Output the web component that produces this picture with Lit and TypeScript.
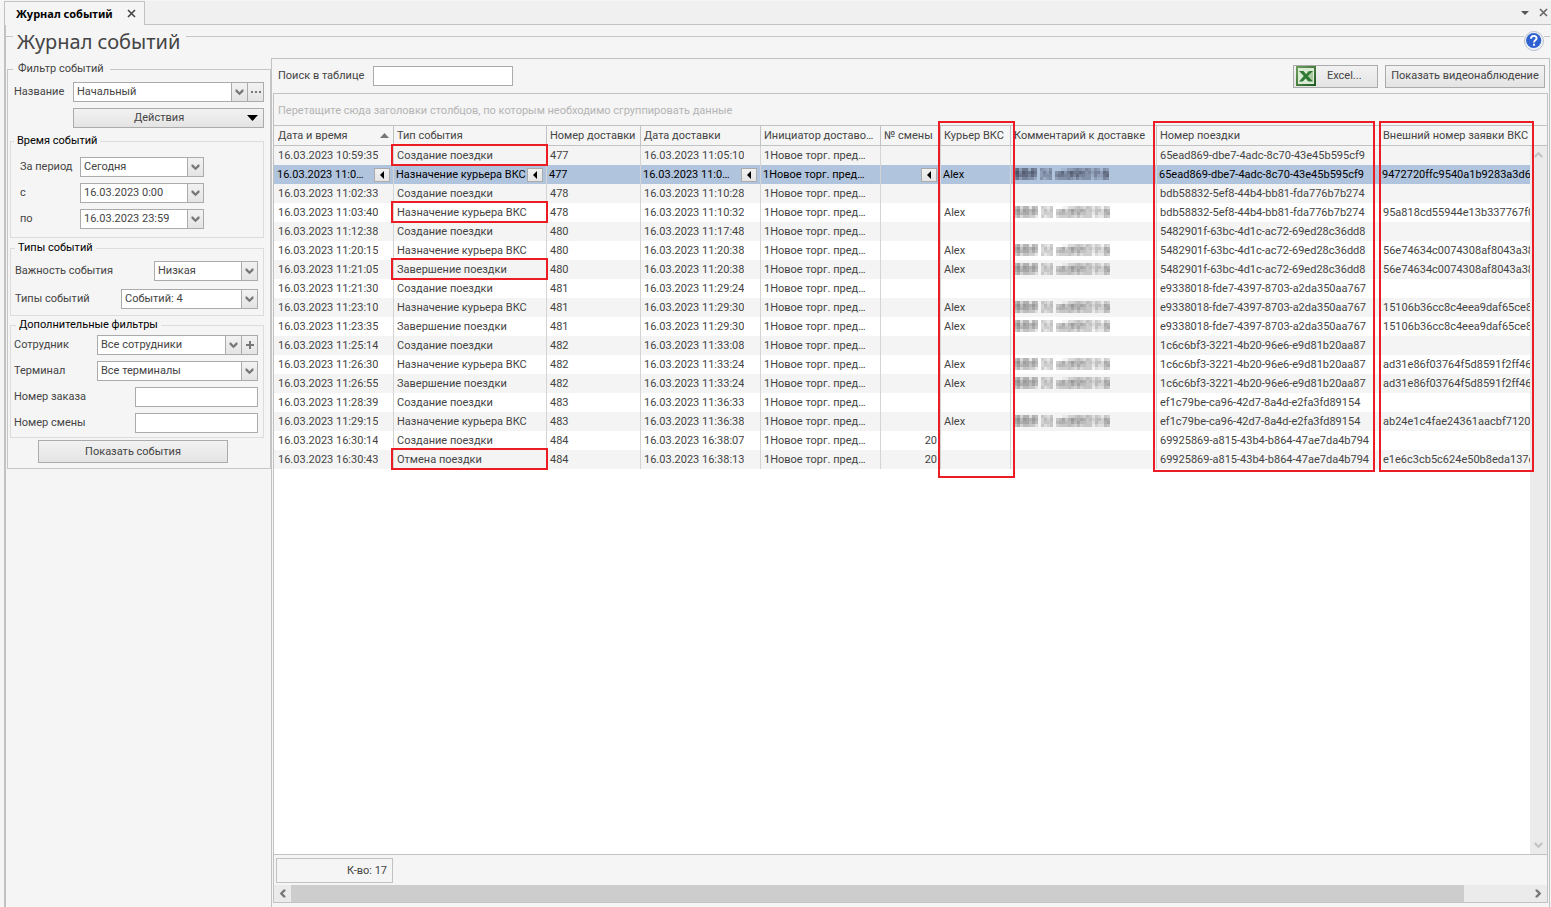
import { LitElement, html, css, svg } from "lit";
import { customElement, state } from "lit/decorators.js";
import { classMap } from "lit/directives/class-map.js";

interface Row {
  at: string;
  type: string;
  num: string;
  date: string;
  shift?: string;
  courier?: string;
  trip: string;
  ext?: string;
  marked?: boolean;
}

const CREATE = "Создание поездки";
const ASSIGN = "Назначение курьера ВКС";
const DONE = "Завершение поездки";
const CANCEL = "Отмена поездки";

const T1 = "65ead869-dbe7-4adc-8c70-43e45b595cf9";
const T2 = "bdb58832-5ef8-44b4-bb81-fda776b7b274";
const T3 = "5482901f-63bc-4d1c-ac72-69ed28c36dd8";
const T4 = "e9338018-fde7-4397-8703-a2da350aa767";
const T5 = "1c6c6bf3-3221-4b20-96e6-e9d81b20aa87";
const T6 = "ef1c79be-ca96-42d7-8a4d-e2fa3fd89154";
const T7 = "69925869-a815-43b4-b864-47ae7da4b794";

const ROWS: Row[] = [
  { at: "10:59:35", type: CREATE, num: "477", date: "11:05:10", trip: T1, marked: true },
  { at: "11:0…", type: ASSIGN, num: "477", date: "11:0…", courier: "Alex", trip: T1, ext: "9472720ffc9540a1b9283a3d61" },
  { at: "11:02:33", type: CREATE, num: "478", date: "11:10:28", trip: T2 },
  { at: "11:03:40", type: ASSIGN, num: "478", date: "11:10:32", courier: "Alex", trip: T2, ext: "95a818cd55944e13b337767f0", marked: true },
  { at: "11:12:38", type: CREATE, num: "480", date: "11:17:48", trip: T3 },
  { at: "11:20:15", type: ASSIGN, num: "480", date: "11:20:38", courier: "Alex", trip: T3, ext: "56e74634c0074308af8043a38" },
  { at: "11:21:05", type: DONE, num: "480", date: "11:20:38", courier: "Alex", trip: T3, ext: "56e74634c0074308af8043a38", marked: true },
  { at: "11:21:30", type: CREATE, num: "481", date: "11:29:24", trip: T4 },
  { at: "11:23:10", type: ASSIGN, num: "481", date: "11:29:30", courier: "Alex", trip: T4, ext: "15106b36cc8c4eea9daf65ce86" },
  { at: "11:23:35", type: DONE, num: "481", date: "11:29:30", courier: "Alex", trip: T4, ext: "15106b36cc8c4eea9daf65ce86" },
  { at: "11:25:14", type: CREATE, num: "482", date: "11:33:08", trip: T5 },
  { at: "11:26:30", type: ASSIGN, num: "482", date: "11:33:24", courier: "Alex", trip: T5, ext: "ad31e86f03764f5d8591f2ff46" },
  { at: "11:26:55", type: DONE, num: "482", date: "11:33:24", courier: "Alex", trip: T5, ext: "ad31e86f03764f5d8591f2ff46" },
  { at: "11:28:39", type: CREATE, num: "483", date: "11:36:33", trip: T6 },
  { at: "11:29:15", type: ASSIGN, num: "483", date: "11:36:38", courier: "Alex", trip: T6, ext: "ab24e1c4fae24361aacbf71207" },
  { at: "16:30:14", type: CREATE, num: "484", date: "16:38:07", shift: "20", trip: T7 },
  { at: "16:30:43", type: CANCEL, num: "484", date: "16:38:13", shift: "20", trip: T7, ext: "e1e6c3cb5c624e50b8eda137d", marked: true },
];

/* Darkness of each 3px block of the hidden comment, 0 to 9. */
const MOSAIC = [
  "57366265043240001133454354243143",
  "79587686035350457468667645355376",
  "68677575034440566557575544253367",
  "46355442042340344454353444132254",
];

const mosaic = svg`<svg class="mosaic" width="96" height="12" viewBox="0 0 96 12" shape-rendering="crispEdges">${MOSAIC.flatMap((line, y) =>
  [...line].map((d, x) => (d === "0" ? "" : svg`<rect x=${x * 3} y=${y * 3} width="3" height="3" fill="currentColor" opacity=${Number(d) / 14} />`)),
)}</svg>`;

const chevron = (cls = "") => svg`<svg class="chev ${cls}" width="9" height="7" viewBox="0 0 9 7"><path d="M0.500 .5v2L4.500 6.300 8.500 2.500v-2h-1.500L4.500 3.200 2 .5z" fill="currentColor"/></svg>`;
const cross = svg`<svg width="9" height="9" viewBox="0 0 9 9"><path d="M1 1l7 7M8 1L1 8" stroke="currentColor" stroke-width="1.600" fill="none"/></svg>`;

const base = css`
  * { box-sizing: border-box; }
  button, input, select {
    font: inherit;
    color: inherit;
    border-radius: 0;
    margin: 0;
    outline: none;
  }
  button {
    display: flex;
    align-items: center;
    justify-content: center;
    padding: 0;
    border: 1px solid #ababab;
    background: linear-gradient(#f2f2f2, #e4e4e4);
  }
`;

@customElement("drop-field")
class DropField extends LitElement {
  static properties = { label: {}, value: {}, extra: {} };
  declare label: string;
  declare value: string;
  declare extra: string;

  static styles = [
    base,
    css`
      :host { display: block; }
      .field { display: flex; align-items: center; height: 20px; }
      label { flex: 1; white-space: nowrap; }
      .box {
        display: flex;
        width: var(--field-width);
        height: 20px;
        background: #fff;
        border: 1px solid #ababab;
      }
      .pick { display: grid; flex: 1; min-width: 0; }
      select {
        grid-area: 1 / 1;
        appearance: none;
        border: 0;
        background: none;
        padding: 0 19px 0 3px;
        line-height: 18px;
        min-width: 0;
      }
      .arrow, .more {
        display: flex;
        align-items: center;
        justify-content: center;
        width: 16px;
        border: 0;
        border-left: 1px solid #ababab;
        background: linear-gradient(#f2f2f2, #e4e4e4);
        color: #777;
      }
      .arrow { grid-area: 1 / 1; justify-self: end; pointer-events: none; }
    `,
  ];

  render() {
    return html`
      <div class="field">
        <label for="pick">${this.label}</label>
        <div class="box">
          <div class="pick">
            <select id="pick"><option>${this.value}</option></select>
            <span class="arrow">${chevron()}</span>
          </div>
          ${this.extra === "dots"
            ? html`<button class="more" aria-label="Ещё"><svg width="10" height="2" viewBox="0 0 10 2"><path d="M0 0h2v2H0zM4 0h2v2H4zM8 0h2v2H8z" fill="#777" /></svg></button>`
            : this.extra === "plus"
              ? html`<button class="more" aria-label="Добавить"><svg width="8" height="8" viewBox="0 0 8 8"><path d="M3 0h2v3h3v2H5v3H3V5H0V3h3z" fill="#777" /></svg></button>`
              : ""}
        </div>
      </div>
    `;
  }
}

@customElement("filter-panel")
class FilterPanel extends LitElement {
  static styles = [
    base,
    css`
      :host { display: block; }
      fieldset { margin: 0; min-width: 0; border: 1px solid #dcdcdc; }
      legend { color: #000; padding: 0 3px; line-height: 14px; }
      .outer { border: 1px solid #c6c6c6; padding: 6px 6px 5px 2px; }
      .outer > legend { color: #444; margin-left: 3px; padding: 0 6px 0 5px; }
      .name { --field-width: 191px; padding-left: 4px; }
      .actions {
        width: 191px;
        height: 20px;
        margin: 6px 0 6px auto;
        padding: 0 5px 0 60px;
        justify-content: space-between;
      }
      .group { display: flex; flex-direction: column; }
      .time { --field-width: 124px; gap: 6px; padding: 9px 59px 8px 9px; }
      .time legend { margin-left: -6px; }
      .types { margin-top: 3px; gap: 8px; padding: 6px 5px 6px 4px; }
      .level { --field-width: 104px; }
      .kinds { --field-width: 137px; }
      .more { --field-width: 161px; margin-top: 2px; gap: 6px; padding: 3px 5px 4px 3px; }
      .more legend { margin-left: 2px; }
      .row { display: flex; align-items: center; justify-content: space-between; }
      .row input { width: 123px; height: 20px; border: 1px solid #ababab; background: #fff; }
      .show { width: 190px; height: 23px; margin: 2px auto 0 28px; }
    `,
  ];

  render() {
    return html`
      <fieldset class="outer">
        <legend>Фильтр событий</legend>
        <drop-field class="name" label="Название" value="Начальный" extra="dots"></drop-field>
        <button class="actions">
          Действия
          <svg width="11" height="6" viewBox="0 0 11 6"><path d="M0 0h11L5.500 6z" fill="#000" /></svg>
        </button>
        <fieldset class="group time">
          <legend>Время событий</legend>
          <drop-field label="За период" value="Сегодня"></drop-field>
          <drop-field label="с" value="16.03.2023 0:00"></drop-field>
          <drop-field label="по" value="16.03.2023 23:59"></drop-field>
        </fieldset>
        <fieldset class="group types">
          <legend>Типы событий</legend>
          <drop-field class="level" label="Важность события" value="Низкая"></drop-field>
          <drop-field class="kinds" label="Типы событий" value="Событий: 4"></drop-field>
        </fieldset>
        <fieldset class="group more">
          <legend>Дополнительные фильтры</legend>
          <drop-field label="Сотрудник" value="Все сотрудники" extra="plus"></drop-field>
          <drop-field label="Терминал" value="Все терминалы"></drop-field>
          <div class="row"><label for="order">Номер заказа</label><input id="order" /></div>
          <div class="row"><label for="shift">Номер смены</label><input id="shift" /></div>
        </fieldset>
        <button class="show">Показать события</button>
      </fieldset>
    `;
  }
}

@customElement("event-grid")
class EventGrid extends LitElement {
  @state() selected = 1;

  static styles = [
    base,
    css`
      :host {
        display: flex;
        flex-direction: column;
        flex: 1;
        min-height: 0;
        border: 1px solid #c2c2c2;
      }
      .hint { height: 31px; padding: 0 4px; line-height: 34px; color: #b4b4b4; }
      .view {
        flex: 1;
        min-height: 0;
        display: grid;
        grid-template-columns: minmax(0, 1fr) 17px;
        grid-template-rows: 21px minmax(0, 1fr);
        background: #fff;
        border-bottom: 1px solid #c2c2c2;
      }
      table {
        grid-area: 1 / 1 / 3 / 3;
        align-self: start;
        width: 100%;
        table-layout: fixed;
        border-collapse: separate;
        border-spacing: 0;
      }
      th, td { padding: 0 0 0 3px; white-space: nowrap; text-align: left; font-weight: 400; }
      th:first-child, td:first-child { padding-left: 4px; }
      th {
        position: relative;
        height: 21px;
        background: #f5f5f5;
        border: solid #c2c2c2;
        border-width: 1px 1px 1px 0;
      }
      th:last-child { border-right: 0; }
      td { height: 19px; border-right: 1px solid #d4d4d4; position: relative; }
      td:last-child { border-right: 0; padding-right: 17px; }
      tr:nth-child(odd) td { background: #f4f4f4; }
      tr.selected td { background: #b0c4de; color: #000; padding-left: 2px; }
      tr.selected td:first-child { padding-left: 3px; }
      tr.selected td:last-child { background: linear-gradient(#b0c4de, #b0c4de) content-box; padding-left: 0; }
      .selected td:last-child .cell { padding-left: 2px; height: 19px; }
      .c1 { width: 120px; } .c2 { width: 153px; } .c3 { width: 94px; }
      .c4 { width: 120px; } .c5 { width: 120px; } .c6 { width: 60px; }
      .c7 { width: 70px; } .c8 { width: 146px; } .c9 { width: 223px; }
      .cell { display: flex; align-items: center; justify-content: space-between; height: 18px; overflow: hidden; }
      .text { overflow: hidden; text-overflow: ellipsis; }
      .end { justify-content: flex-end; padding-right: 3px; }
      .selected .end { padding-right: 0; }
      .sort { margin-right: 4px; flex: none; }
      .flag { width: 16px; height: 14px; margin-right: 3px; flex: none; }
      .marked::after, .framed::after {
        content: "";
        position: absolute;
        border: 2px solid #ec1c24;
        pointer-events: none;
      }
      .marked::after { inset: -2px -2px -1px -3px; z-index: 1; }
      .framed::after { top: -5px; left: -4px; right: 4px; height: 347px; z-index: 2; }
      .tall::after { left: -3px; right: -5px; height: 353px; }
      .last::after { left: -1px; right: 13px; }
      .mosaic { display: block; color: #555; margin-bottom: 2px; }
      .selected .mosaic { color: #112; }
      .vbar {
        grid-area: 2 / 2;
        z-index: 1;
        display: flex;
        flex-direction: column;
        justify-content: space-between;
        align-items: center;
        padding: 5px 0;
        background: #ebebeb;
        color: #c4c4c4;
      }
      .up { transform: rotate(180deg); }
      .left { transform: rotate(90deg); }
      .right { transform: rotate(-90deg); }
      .summary { height: 30px; padding: 3px 2px; }
      .count { width: 117px; height: 25px; border: 1px solid #c2c2c2; text-align: right; padding-right: 5px; line-height: 23px; }
      .hbar { display: flex; align-items: center; height: 17px; gap: 4px; background: #ebebeb; color: #777; padding: 0 4px; }
      .thumb { flex: 19; height: 17px; background: #cdcdcd; }
      .track { flex: 1; }
    `,
  ];

  private flag = html`<button class="flag" aria-label="Фильтр по значению"><svg width="4" height="8" viewBox="0 0 4 8"><path d="M4 0v8L0 4z" fill="#000" /></svg></button>`;

  private row(r: Row, i: number) {
    const sel = i === this.selected;
    const flag = sel ? this.flag : "";
    return html`
      <tr class=${classMap({ selected: sel })} @click=${() => (this.selected = i)}>
        <td><div class="cell"><span class="text">16.03.2023 ${r.at}</span>${flag}</div></td>
        <td class=${classMap({ marked: !!r.marked })}><div class="cell"><span class="text">${r.type}</span>${flag}</div></td>
        <td>${r.num}</td>
        <td><div class="cell"><span class="text">16.03.2023 ${r.date}</span>${flag}</div></td>
        <td>1Новое торг. пред…</td>
        <td><div class="cell end">${r.shift ?? ""}${sel ? this.flag : ""}</div></td>
        <td>${r.courier ?? ""}</td>
        <td>${r.courier ? mosaic : ""}</td>
        <td>${r.trip}</td>
        <td><div class="cell">${r.ext ?? ""}</div></td>
      </tr>
    `;
  }

  render() {
    return html`
      <div class="hint">Перетащите сюда заголовки столбцов, по которым необходимо сгруппировать данные</div>
      <div class="view">
        <table>
          <thead>
            <tr>
              <th class="c1"><div class="cell">Дата и время<svg class="sort" width="9" height="5" viewBox="0 0 9 5"><path d="M4.500 0L9 5H0z" fill="#777" /></svg></div></th>
              <th class="c2">Тип события</th>
              <th class="c3">Номер доставки</th>
              <th class="c4">Дата доставки</th>
              <th class="c5">Инициатор доставо…</th>
              <th class="c6">№ смены</th>
              <th class="c7 framed tall">Курьер ВКС</th>
              <th class="c8">Комментарий к доставке</th>
              <th class="c9 framed">Номер поездки</th>
              <th class="framed last">Внешний номер заявки ВКС</th>
            </tr>
          </thead>
          <tbody>${ROWS.map((r, i) => this.row(r, i))}</tbody>
        </table>
        <div class="vbar">${chevron("up")}${chevron()}</div>
      </div>
      <div class="summary"><div class="count">К-во: 17</div></div>
      <div class="hbar">${chevron("left")}<div class="thumb"></div><div class="track"></div>${chevron("right")}</div>
    `;
  }
}

@customElement("app-root")
class AppRoot extends LitElement {
  static styles = [
    base,
    css`
      :host {
        display: flex;
        flex-direction: column;
        height: 100vh;
        padding: 1px 0 0 4px;
        background: #f5f5f5;
        color: #444;
        font: 11px/14px Roboto, "Noto Sans", sans-serif;
        overflow: hidden;
      }
      .tabs { display: flex; height: 24px; flex: none; }
      .tab {
        display: flex;
        align-items: center;
        justify-content: space-between;
        width: 141px;
        padding: 0 8px 0 11px;
        border: 1px solid #c2c2c2;
        border-bottom: 0;
        color: #000;
        font-family: "Noto Sans", sans-serif;
        font-weight: 700;
        white-space: nowrap;
      }
      .tab button { color: #444; }
      .rest {
        flex: 1;
        display: flex;
        align-items: center;
        justify-content: flex-end;
        gap: 10px;
        padding-right: 3px;
        background: #f0f0f0;
        border-bottom: 1px solid #c2c2c2;
        color: #666;
      }
      .plain { border: 0; background: none; }
      .page { flex: 1; display: flex; flex-direction: column; min-height: 0; border-left: 2px solid #c2c2c2; padding-right: 1px; }
      .head { display: flex; align-items: center; height: 22px; margin-top: 6px; flex: none; }
      h1 { margin: 0 6px 0 4px; font: 400 20px/22px "Noto Sans", sans-serif; }
      .rule { flex: 1; height: 1px; background: #c6c6c6; margin-bottom: 11px; }
      .lead { flex: none; width: 7px; }
      .tail { flex: none; width: 6px; }
      .help { margin-bottom: 3px; }
      .body { flex: 1; display: grid; grid-template-columns: 265px minmax(0, 1fr); min-height: 0; margin-top: 5px; }
      filter-panel { margin: 4px 0 0 1px; }
      .main { display: flex; flex-direction: column; min-height: 0; border: 1px solid #c2c2c2; border-bottom: 0; padding: 0 1px 5px; }
      .tools { display: flex; align-items: center; height: 34px; padding: 0 3px 0 5px; gap: 7px; }
      .tools input { width: 140px; height: 20px; border: 1px solid #ababab; background: #fff; margin: 0 auto 0 2px; }
      .tools button { height: 23px; }
      .tools .excel { width: 85px; gap: 11px; justify-content: flex-start; padding-left: 2px; }
      .video { width: 160px; }
    `,
  ];

  render() {
    return html`
      <div class="tabs">
        <div class="tab">Журнал событий<button class="plain" aria-label="Закрыть вкладку">${cross}</button></div>
        <div class="rest">
          <button class="plain" aria-label="Список вкладок"><svg width="8" height="4" viewBox="0 0 8 4"><path d="M0 0h8L4 4z" fill="#555" /></svg></button>
          <button class="plain" aria-label="Закрыть">${cross}</button>
        </div>
      </div>
      <div class="page">
        <div class="head">
          <span class="rule lead"></span>
          <h1>Журнал событий</h1>
          <span class="rule"></span>
          <button class="plain help" aria-label="Справка">
            <svg width="20" height="20" viewBox="0 0 20 20">
              <circle cx="10" cy="10" r="9.500" fill="#eef1f6" stroke="#b9c0cd" />
              <circle cx="9.700" cy="9.500" r="7.600" fill="#2f62d0" />
              <path d="M7 7.800c0-3.800 5.600-3.800 5.600-.6 0 2-2.600 2-2.600 4.200M10 12.800v2" fill="none" stroke="#fff" stroke-width="1.900" />
            </svg>
          </button>
          <span class="rule tail"></span>
        </div>
        <div class="body">
          <filter-panel></filter-panel>
          <div class="main">
            <div class="tools">
              <label for="find">Поиск в таблице</label>
              <input id="find" />
              <button class="excel">
                <svg width="20" height="20" viewBox="0 0 20 20">
                  <defs>
                    <linearGradient id="xl" x1="0" y1="0" x2="1" y2="1">
                      <stop offset="0" stop-color="#6f9f5c" />
                      <stop offset="1" stop-color="#1f5a22" />
                    </linearGradient>
                  </defs>
                  <path d="M0 0h20v20H0z" fill="url(#xl)" />
                  <path d="M2 2h16v16H2z" fill="#dcebd6" />
                  <path d="M11 6h6M11 8h6M11 10h6M11 12h6M11 14h6" stroke="#7fae70" />
                  <path d="M3 5h4.500l2.500 3L13.500 5H17l-5.200 5 5.200 5.500h-4.500l-2.800-3-3 3H3L7.800 10z" fill="#2f7a34" />
                </svg>
                Excel...
              </button>
              <button class="video">Показать видеонаблюдение</button>
            </div>
            <event-grid></event-grid>
          </div>
        </div>
      </div>
    `;
  }
}
